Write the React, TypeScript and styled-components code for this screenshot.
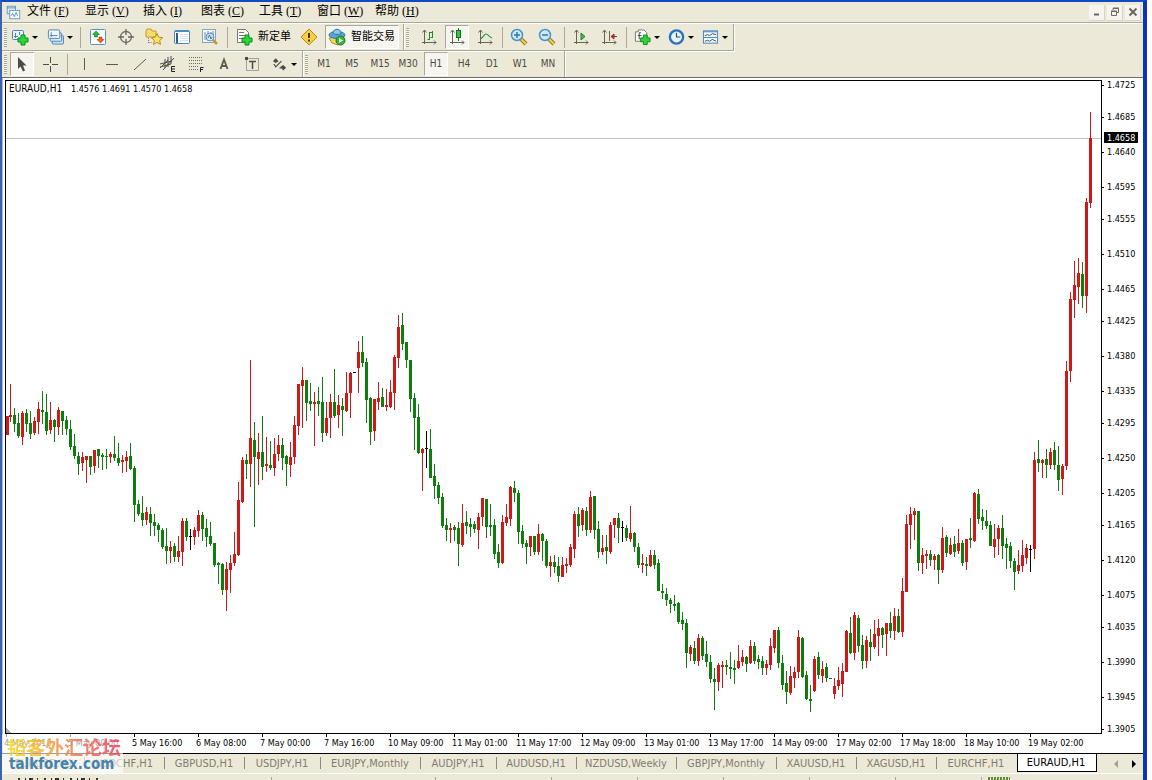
import React from "react";
import styled, { createGlobalStyle, css } from "styled-components";

const FACE = "#ece9d8";
const SHADOW = "#aca899";
const UI = `"DejaVu Sans Condensed", "DejaVu Sans", "Noto Sans CJK SC", sans-serif`;
const HAN = `"Liberation Serif", "Noto Sans CJK SC", serif`;

const Global = createGlobalStyle`
  * { box-sizing: border-box; }
  body { margin: 0; background: #fff; overflow: hidden; }
  button { font: inherit; color: inherit; background: none; border: 0; padding: 0; }
`;

/* ---------- window frame ---------- */

const Window = styled.div`
  display: flex;
  flex-direction: column;
  margin-right: 5px;
  border-top: 2px solid #0f4cc4;
  border-right: 4px solid #0c35b8;
  border-left: 2px solid #3a64ae;
  background: #fff;
  font-family: ${UI};
  font-size: 11px;
`;

const MenuBar = styled.nav`
  display: flex;
  align-items: center;
  height: 22px;
  padding-left: 4px;
  background: ${FACE};
  border-bottom: 1px solid #fff;
  box-shadow: inset 0 -1px 0 ${SHADOW};
`;

const MenuItem = styled.button`
  width: 58px;
  height: 20px;
  text-align: left;
  font: 12px/16px ${HAN};
  padding-bottom: 4px;
  color: #000;
  white-space: nowrap;
`;

const AppMark = styled.span`
  display: flex;
  width: 21px;
`;

const Caption = styled.span`
  display: flex;
  gap: 2px;
  margin-left: auto;
  padding-right: 2px;
`;

const CaptionButton = styled.button`
  display: flex;
  align-items: center;
  justify-content: center;
  width: 16px;
  height: 16px;
  background: #f5f4ee;
  border-right: 1px solid #d8d5c6;
  border-bottom: 1px solid #d8d5c6;
`;

/* ---------- toolbars ---------- */

const Toolbars = styled.header`
  display: flex;
  flex-direction: column;
  background: ${FACE};
  border-bottom: 1px solid #716f64;
`;

const ToolRow = styled.div<{ $h: number }>`
  display: flex;
  height: ${(p) => p.$h}px;
`;

const Toolbar = styled.div<{ $last?: boolean }>`
  display: flex;
  align-items: center;
  padding-right: 2px;
  border-right: 1px solid ${SHADOW};
  border-bottom: ${(p) => (p.$last ? "0" : `1px solid ${SHADOW}`)};
  box-shadow: 1px ${(p) => (p.$last ? "0" : "1px")} 0 #fff;
`;

const Grip = styled.span<{ $after: number }>`
  width: 3px;
  height: 19px;
  margin: 0 ${(p) => p.$after}px 0 2px;
  background: repeating-linear-gradient(${SHADOW} 0 1px, #f8f7f0 1px 2px);
`;

const Separator = styled.span<{ $w: number }>`
  width: 1px;
  height: 21px;
  margin: 0 ${(p) => p.$w / 2 - 1}px 0 ${(p) => p.$w / 2}px;
  background: ${SHADOW};
`;

const Tool = styled.button<{ $pressed?: boolean; $w?: number; $gap?: number }>`
  display: flex;
  align-items: center;
  justify-content: ${(p) => (p.$w ? "flex-start" : "center")};
  gap: ${(p) => p.$gap ?? 3}px;
  flex: none;
  width: ${(p) => p.$w ?? 24}px;
  height: 24px;
  margin: 0 2px;
  padding-left: ${(p) => (p.$w ? 2 : 0)}px;
  border: 1px solid transparent;
  font: 11px/14px ${UI};
  white-space: nowrap;
  color: #000;
  ${(p) =>
    p.$pressed &&
    css`
      background: #f6f5ef;
      border-color: ${SHADOW} #fff #fff ${SHADOW};
    `}
`;

const Period = styled(Tool)`
  font-size: 10px;
  color: #4c4a42;
`;

const Arrow = styled.i`
  width: 5px;
  border: 3px solid transparent;
  border-top-color: #000;
  border-bottom: 0;
`;

/* ---------- chart, tabs, status ---------- */

const Plot = styled.svg`
  display: block;
  width: 100%;
  font-family: ${UI};
  font-size: 9px;
`;

const Footer = styled.footer`
  position: relative;
  background: ${FACE};
  border-top: 1px solid #000;
`;

const Tabs = styled.div`
  display: flex;
  height: 20px;
  padding-left: 3px;
  border-bottom: 1px solid #fff;
`;

const Tab = styled.button<{ $w: number; $active?: boolean; $bar?: boolean }>`
  flex: none;
  display: flex;
  align-items: center;
  justify-content: center;
  width: ${(p) => p.$w}px;
  height: 18px;
  padding-right: 2px;
  color: ${(p) => (p.$active ? "#000" : "#7f7c6e")};
  background: ${(p) =>
    p.$active ? "#fff" : p.$bar ? "linear-gradient(#8d8a7c, #8d8a7c) right 3px / 1px 12px no-repeat" : "none"};
  ${(p) =>
    p.$active &&
    css`
      border: solid #000;
      border-width: 0 1px 1px 1px;
    `}
`;

const Scrollers = styled.span`
  display: flex;
  align-items: center;
  gap: 14px;
  margin-left: auto;
  padding-right: 7px;
`;

const Scroll = styled.button<{ $next?: boolean }>`
  width: 4px;
  height: 8px;
  border: solid transparent;
  border-width: ${(p) => (p.$next ? "4px 0 4px 4px" : "4px 4px 4px 0")};
  border-left-color: ${(p) => (p.$next ? "#000" : "transparent")};
  border-right-color: ${(p) => (p.$next ? "transparent" : "#a5a294")};
`;

const StatusBar = styled.div`
  display: flex;
  height: 6px;
  padding: 3px 0 0 2px;
  overflow: hidden;
`;

const StatusCell = styled.span<{ $w: number }>`
  flex: none;
  width: ${(p) => p.$w}px;
  height: 3px;
  border-right: 1px solid ${SHADOW};
`;

const StatusMarks = styled.svg`
  display: block;
  margin-left: 14px;
`;

const Watermark = styled.div`
  position: absolute;
  left: 0;
  bottom: 6px;
  width: 121px;
  height: 40px;
  background: rgba(255, 255, 255, 0.62);
  white-space: nowrap;
`;

const WatermarkName = styled.div`
  margin: 3px 0 0 5px;
  font: bold 19px/19px "Noto Sans CJK SC", sans-serif;
  color: transparent;
  background: linear-gradient(90deg, #f5dc1e, #f8b030 30%, #f08a50 50%, #f0605a 75%, #ee3f5c);
  background-clip: text;
  -webkit-background-clip: text;
  opacity: 0.85;
`;

const WatermarkSite = styled.div`
  padding-left: 7px;
  font: bold 15px/16px "DejaVu Sans Condensed", "DejaVu Sans", sans-serif;
  color: #4683ac;
`;

/* ---------- icons ---------- */

const axes = (
  <path d="M4.5 2v14M2 14.5h14M2.5 4.5l2-2.5 2 2.5M14 12.5l2 2-2 2" stroke="#666459" fill="none" />
);
const sheet = (x: number, y: number) => (
  <rect x={x} y={y} width="11" height="9" rx="1" fill="#e6f1fa" stroke="#4d84b4" />
);
const plus = (x: number, y: number) => (
  <path
    d={`M${x + 3} ${y}h4v3h3v4h-3v3h-4v-3h-3v-4h3z`}
    fill="#2fd43a"
    stroke="#0b8a1a"
  />
);
const lens = (
  <>
    <path d="M11 11l5 5" stroke="#9a7a1c" strokeWidth="4" />
    <path d="M11 11l5 5" stroke="#f4d04c" strokeWidth="2" />
    <circle cx="7" cy="7" r="5.5" fill="#cfe9fb" stroke="#4a92c8" strokeWidth="1.5" />
  </>
);

const icons: Record<string, React.ReactNode> = {
  app: (
    <>
      <rect x="1.500" y="1.500" width="10" height="9" fill="#dcecf8" stroke="#5c93bf" />
      <rect x="4.500" y="6.500" width="12" height="10" fill="#f4f9fd" stroke="#5c93bf" />
      <path d="M1 3.500h11M6 13l2-3 2 4 2-5 2 4" fill="none" stroke="#4a86b8" />
    </>
  ),
  newChart: (
    <>
      {sheet(1.5, 2.5)}
      <path d="M4.500 5v5M3 8.500h4M8.500 4v3" stroke="#4d84b4" fill="none" />
      {plus(7, 7)}
    </>
  ),
  profiles: (
    <>
      <rect x="5.500" y="7.500" width="12" height="9" rx="1" fill="#c9dff0" stroke="#4d84b4" />
      <rect x="3.500" y="4.500" width="12" height="9" rx="1" fill="#d8e8f5" stroke="#4d84b4" />
      <rect x="1.500" y="1.500" width="12" height="9" rx="1" fill="#eef6fc" stroke="#4d84b4" />
      <path d="M4.500 4v5M3 7.500h8" stroke="#4d84b4" fill="none" />
    </>
  ),
  market: (
    <>
      <rect x="1.500" y="1.500" width="15" height="15" rx="1" fill="#fff" stroke="#4f94c6" />
      <path d="M7 3l3.500 3.500-2 0v2.500h-3v-2.500h-2z" fill="#2fb53a" stroke="#167a22" strokeWidth=".6" />
      <path d="M11.500 15l3.500-3.500h-2v-2.500h-3v2.500h-2z" fill="#f0622e" stroke="#a83a12" strokeWidth=".6" />
    </>
  ),
  target: (
    <g fill="none" stroke="#6a6860" strokeWidth="1.300">
      <circle cx="9" cy="9" r="5.500" />
      <path d="M9 1v6M9 11v6M1 9h6M11 9h6" />
    </g>
  ),
  favorites: (
    <>
      <path d="M1 3l1-2h4l1 2h4v6H1z" fill="#f7dd6a" stroke="#c39a26" />
      <path d="M3.500 10v5M3.500 14.500h4" stroke="#777" strokeDasharray="1 1" />
      <path d="M12 5.500l1.700 3.700 4 .5-3 2.700.8 4-3.500-2-3.500 2 .8-4-3-2.700 4-.5z" fill="#fbe26a" stroke="#b98c1c" />
    </>
  ),
  navigator: (
    <>
      <rect x="1.500" y="2.500" width="15" height="13" rx="1" fill="#fff" stroke="#4a8cc2" />
      <path d="M2 3.500h14" stroke="#4a8cc2" />
      <path d="M4 5v10" stroke="#2b5f93" strokeWidth="2" />
      <path d="M7 6.500h8M7 8.500h8M7 10.500h8M7 12.500h8" stroke="#c3d9ea" strokeWidth=".8" />
    </>
  ),
  tester: (
    <>
      <rect x="1.500" y="1.500" width="13" height="13" fill="#f6fafc" stroke="#86a4bb" />
      <path d="M4 4v8M7 3v6M10 4v4M12 3v7" stroke="#6a8fb0" />
      <path d="M12 12l4 4" stroke="#c99a2c" strokeWidth="2.500" />
      <circle cx="9" cy="9" r="4" fill="#cbe4f6" fillOpacity=".8" stroke="#5f91b8" />
      <path d="M7 10l1.500-3 1.500 4 1-2" fill="none" stroke="#52759a" />
    </>
  ),
  order: (
    <>
      <path d="M2.500 1.500h8l3 3v10h-11z" fill="#fff" stroke="#77756c" />
      <path d="M4 4.500h5M4 7.500h7M4 10.500h5" stroke="#77756c" />
      {plus(7, 7)}
    </>
  ),
  warning: (
    <>
      <path d="M9 1l8 8-8 8-8-8z" fill="#f8cf3e" stroke="#b88716" strokeLinejoin="round" />
      <path d="M9 5v5M9 11.500v2" stroke="#4b3a08" strokeWidth="2" />
    </>
  ),
  advisor: (
    <>
      <path d="M1 10l3 5 6 2 5-5 1-4z" fill="#f5d65a" stroke="#b4922a" />
      <ellipse cx="9" cy="7" rx="8" ry="3.500" fill="#5ba4d6" stroke="#2c73a8" />
      <path d="M5 5c0-5 8-5 8 0 0 2-8 2-8 0z" fill="#8cc5e8" stroke="#2c73a8" />
      <circle cx="12.500" cy="12.500" r="4.500" fill="#37b53f" stroke="#167a22" />
      <path d="M11 10l4 2.500-4 2.500z" fill="#fff" />
    </>
  ),
  bars: (
    <>
      {axes}
      <path d="M9.500 4v8M9.500 11.500h-2M9.500 4.500h3M12.500 3v7M12.500 9.500h-2" stroke="#1e8a2a" />
    </>
  ),
  candles: (
    <>
      {axes}
      <path d="M10.500 0v13" stroke="#14701f" />
      <rect x="8.500" y="2.500" width="4" height="7" fill="#2fc53c" stroke="#14701f" />
    </>
  ),
  line: (
    <>
      {axes}
      <path d="M4 11c3-1 4-5 6-5s3 3 6 4" fill="none" stroke="#2a9a36" strokeWidth="1.200" />
    </>
  ),
  zoomIn: (
    <>
      {lens}
      <path d="M4 7h6M7 4v6" stroke="#2d78b0" strokeWidth="1.500" />
    </>
  ),
  zoomOut: (
    <>
      {lens}
      <path d="M4 7h6" stroke="#2d78b0" strokeWidth="1.500" />
    </>
  ),
  scroll: (
    <>
      {axes}
      <path d="M9 5l4 3.500-4 3.500z" fill="#3fc24a" stroke="#14802a" />
    </>
  ),
  shift: (
    <>
      {axes}
      <path d="M9.500 3v10" stroke="#666459" />
      <path d="M17 8.500h-5M14 6l-3 2.500 3 2.500z" fill="#b8342a" stroke="#a02c22" />
    </>
  ),
  indicators: (
    <>
      <path d="M1.500 3.500h3v-2h6l3 3v9h-12z" fill="#fff" stroke="#77756c" />
      <path d="M7.500 4.500h-2v7M4 7.500h4" stroke="#3b3a34" fill="none" />
      {plus(7, 7)}
    </>
  ),
  clock: (
    <>
      <circle cx="9" cy="9" r="7" fill="#e8f4fd" stroke="#2a72bd" strokeWidth="2.500" />
      <path d="M9 4.500V9h4" fill="none" stroke="#274f77" strokeWidth="1.200" />
    </>
  ),
  template: (
    <>
      <rect x="1.500" y="2.500" width="15" height="13" fill="#f4fafd" stroke="#3f83b8" />
      <path d="M2 3.500h14M2 9.500h14" stroke="#3f83b8" />
      <path d="M3 7.500l3-1 2 1 3-2 4 1M3 13.500l3-1 2 1 3-2 4 2" fill="none" stroke="#2e4e5f" />
    </>
  ),
  pointer: <path d="M5 2l8.500 8.500H10l2 5-2 1-2.500-5-2.500 2.500z" fill="#4c4b46" />,
  cross: <path d="M9.500 2v6M9.500 11v6M2 9.500h6M11 9.500h6" stroke="#4c4b46" />,
  vline: <path d="M9.500 3v12" stroke="#5b5a54" />,
  hline: <path d="M3 9.500h12" stroke="#5b5a54" />,
  trend: <path d="M3 15L15 4" stroke="#5b5a54" />,
  channel: (
    <>
      <path d="M1 13l8-8M4 15L15 3M1 9l12-3M1 12l11-3M6 4v9M9 2v10M12 1v8" stroke="#4c4b46" fill="none" />
      <path d="M16 11.500h-3.500v5H16M13 14h3" stroke="#222" fill="none" />
    </>
  ),
  fibo: (
    <>
      <path d="M2 2.500h14M2 5.500h14M2 8.500h14M2 11.500h9M2 14.500h9" stroke="#6b6a62" strokeDasharray="1 1" />
      <path d="M16.500 12.500h-3V17M13 14.500h3" stroke="#222" fill="none" />
    </>
  ),
  text: <path d="M5.500 14L9 4.500l3.500 9.500M6.500 11h5" stroke="#5b5a54" strokeWidth="1.800" fill="none" />,
  label: (
    <>
      <rect x="3.500" y="3.500" width="12" height="12" fill="none" stroke="#5b5a54" strokeDasharray="1 1" />
      <path d="M6 6.500h7M9.500 6v8" stroke="#4c4b46" strokeWidth="1.500" />
      <path d="M2 2h3v3H2z" fill="#4c4b46" />
    </>
  ),
  shapes: (
    <>
      <path d="M2 6l3-3 3 3-3 2zM10 12l3-2 3 3-3 3z" fill="#4c4b46" />
      <path d="M3 9l2 3 6-6M9 13h3" fill="none" stroke="#4c4b46" strokeWidth="1.300" />
    </>
  ),
};

const Icon = ({ name, size = 18 }: { name: string; size?: number }) => (
  <svg width={size} height={size} viewBox="0 0 18 18" aria-hidden="true">
    {icons[name]}
  </svg>
);

/* ---------- data ---------- */

/* One entry per hourly bar: direction, high, body top, body bottom, low (chart y units). */
const series = `
R416,416,435,435 R384,415,417,422 G408,415,424,432 G413,423,436,438 R411,413,437,445 G409,413,424,432 G411,423,434,439 R417,421,433,435
R402,409,422,434 G391,410,412,424 G394,412,431,435 R402,420,430,434 G419,420,427,442 R407,410,427,435 G411,411,421,435 G416,420,429,435
G420,429,447,450 G434,446,456,459 G452,456,464,475 R452,457,463,471 R456,456,460,483 G456,456,467,475 R450,450,466,473 G449,449,456,468
G453,455,457,470 G449,456,457,469 R452,454,457,463 G436,454,458,461 G443,458,463,466 R455,460,462,473 R451,457,461,472 G443,456,469,470
G466,468,505,522 G500,504,514,516 G496,513,520,526 R507,512,520,525 G507,514,523,536 G514,522,526,536 G523,525,530,542 G528,530,547,549
G528,546,551,564 R541,547,551,563 G543,546,557,562 R536,551,557,562 R518,521,552,566 G518,521,537,541 K529,536,537,550 R527,530,537,545
R510,515,531,537 G512,515,529,541 G519,528,537,547 G522,536,544,546 G543,543,565,567 G562,563,565,584 G563,564,590,595 R562,569,590,611
R555,563,570,593 R532,554,563,566 R482,500,555,556 R457,460,502,503 G454,460,464,479 R360,438,464,487 G422,440,457,527 R433,452,459,485
G416,452,467,480 R437,464,466,472 G441,465,468,470 R438,454,468,476 R435,445,454,461 G438,445,458,470 G455,456,464,486 R442,457,465,477
R416,425,457,464 R384,384,426,435 R367,380,386,428 G380,380,403,421 G383,401,404,411 R392,402,404,446 G387,401,404,416 G377,402,433,442
R402,418,433,436 R394,402,418,438 G369,402,416,418 R395,405,415,428 G398,406,410,436 R372,393,411,412 R372,373,393,418 K372,372,373,373
R341,352,368,393 G336,352,363,367 G358,362,400,423 G397,398,432,445 R399,399,431,441 R382,398,402,410 G388,397,407,407 R389,405,407,411
R380,392,407,408 R355,357,393,410 R315,327,358,368 G313,325,344,350 G342,342,360,368 G360,360,399,412 G393,398,418,450 G404,417,453,454
R448,449,453,491 K431,448,449,468 G429,449,478,478 G464,476,486,499 G482,485,498,504 G493,497,526,528 G518,525,530,541 R523,528,530,543
G525,527,530,541 G522,528,544,566 R504,523,545,547 G511,522,526,534 G518,524,527,537 G521,524,529,533 R513,517,530,549 R498,498,517,526
G499,499,527,538 G504,525,527,536 G519,525,554,559 G544,552,563,568 R515,522,563,564 R504,517,523,526 R486,487,519,526 G481,488,493,502
G490,493,532,544 G525,531,544,548 G540,543,547,564 R536,536,547,556 G536,536,552,555 R524,534,552,555 G533,534,541,561 G539,541,566,568
R556,562,566,577 G555,562,567,573 G557,566,576,582 R557,565,577,577 R558,564,566,573 R544,547,565,567 R511,514,549,558 G507,514,526,537
R508,510,525,531 G507,511,530,536 R491,497,530,533 G496,496,530,539 G521,529,552,558 R535,548,552,555 G535,547,551,564 R522,525,552,554
R518,518,525,538 G513,518,528,543 K521,527,528,542 G525,528,538,541 R506,533,539,542 G532,533,547,552 G543,547,565,568 R554,563,565,573
G557,564,566,576 R550,555,566,567 G550,555,565,569 G559,563,591,591 G584,591,593,599 G588,594,600,606 G598,600,604,613 G595,604,606,611
G602,603,622,624 G612,620,624,630 G619,623,653,668 R645,647,654,661 G641,648,661,664 R634,638,661,666 G636,638,656,660 G641,654,662,667
G655,662,679,683 G668,679,682,710 R663,665,682,691 R661,665,667,688 G660,665,667,675 G652,667,669,679 G660,668,670,684 R645,661,668,669
R650,657,662,666 G656,657,664,672 R640,646,663,664 G642,646,661,664 G655,659,662,669 G656,661,668,675 R660,664,668,675 R638,646,665,670
R630,630,648,653 G627,630,663,668 G655,663,685,690 G671,683,692,704 R666,676,693,695 R667,672,678,688 R630,637,672,678 G637,638,677,678
G671,675,699,700 G685,699,701,712 R656,659,691,692 G652,657,675,679 R661,669,676,683 G663,667,678,682 G678,678,679,679 R678,686,694,699
R667,680,686,690 R663,671,684,697 R630,631,672,672 G617,633,653,654 R612,615,653,660 G615,618,646,652 G635,645,661,669 R636,640,661,668
G629,642,647,661 R620,634,647,649 R619,628,636,656 G627,628,635,648 R623,623,634,656 G612,623,631,638 R608,616,631,640 G609,616,632,633
R578,591,632,637 R515,524,592,592 R507,514,525,549 R508,511,515,540 G511,511,563,571 R548,555,563,574 R550,554,556,569 G550,554,560,566
R554,556,560,570 G554,555,570,584 R527,538,570,573 G535,537,553,557 R538,545,554,555 G536,544,552,557 R529,543,551,554 G540,543,563,566
R539,539,562,570 G518,538,540,548 R492,493,541,542 G489,494,519,524 G509,517,521,530 G510,521,526,529 G521,525,546,546 R524,539,547,558
R525,528,539,555 G515,528,546,559 G538,544,548,569 G542,546,561,568 G558,561,572,590 R550,565,571,574 R540,555,566,572 R544,548,558,564
K545,549,550,572 R452,460,549,559 G440,459,463,472 R459,460,463,478 G449,459,465,478 R448,452,465,469 G442,450,465,470 G446,465,480,491
R464,466,479,495 R361,371,466,470 R292,299,371,382 R261,285,300,318 R258,273,287,304 G262,274,296,308 R198,202,296,313 R112,138,203,208
`;

const candles = series
  .trim()
  .split(/\s+/)
  .map((entry, i) => ({
    x: 6 + i * 4,
    tone: entry[0],
    v: entry.slice(1).split(",").map(Number),
  }));

const tones: Record<string, string> = { R: "#d01818", G: "#0f7d0f", K: "#000" };

const prices: [string, number][] = [
  ["1.4725", 85], ["1.4685", 117], ["1.4640", 152], ["1.4595", 187], ["1.4555", 219],
  ["1.4510", 254], ["1.4465", 289], ["1.4425", 321], ["1.4380", 356], ["1.4335", 391],
  ["1.4295", 423], ["1.4250", 458], ["1.4205", 493], ["1.4165", 525], ["1.4120", 560],
  ["1.4075", 595], ["1.4035", 627], ["1.3990", 662], ["1.3945", 697], ["1.3905", 729],
];

const times = [
  "4 May 2010", "5 May 00:00", "5 May 16:00", "6 May 08:00", "7 May 00:00", "7 May 16:00",
  "10 May 09:00", "11 May 01:00", "11 May 17:00", "12 May 09:00", "13 May 01:00", "13 May 17:00",
  "14 May 09:00", "17 May 02:00", "17 May 18:00", "18 May 10:00", "19 May 02:00",
];

const menus = [
  ["文件", "F"], ["显示", "V"], ["插入", "I"], ["图表", "C"], ["工具", "T"], ["窗口", "W"], ["帮助", "H"],
];

const tabs: [string, number][] = [
  ["EURUSD,H1", 80], ["USDCHF,H1", 80], ["GBPUSD,H1", 80], ["USDJPY,H1", 76], ["EURJPY,Monthly", 100],
  ["AUDJPY,H1", 76], ["AUDUSD,H1", 80], ["NZDUSD,Weekly", 100], ["GBPJPY,Monthly", 100],
  ["XAUUSD,H1", 80], ["XAGUSD,H1", 80], ["EURCHF,H1", 80], ["EURAUD,H1", 80],
];

const periods = ["M1", "M5", "M15", "M30", "H1", "H4", "D1", "W1", "MN"];
const statusCells = [268, 164, 116, 86, 86, 86, 86, 86];

/* ---------- parts ---------- */

const IconTool = ({ name, title, pressed, menu, wide }: {
  name: string; title: string; pressed?: boolean; menu?: boolean; wide?: boolean;
}) => (
  <Tool aria-label={title} aria-pressed={pressed} $pressed={pressed} $w={menu ? (wide ? 32 : 30) : undefined}>
    <Icon name={name} />
    {menu && <Arrow />}
  </Tool>
);

const Chart = () => (
  <Plot viewBox="2 78 1141 675" role="img" aria-label="EURAUD, H1 candlestick chart">
    <g shapeRendering="crispEdges">
      <rect x="2" y="78" width="1" height="675" fill="#a9b7cf" />
      <path d="M6 138.500H1101" stroke="#c0c0c0" />
      {candles.map(({ x, tone, v }) => (
        <g key={x} fill={tones[tone]}>
          <rect x={x} y={v[0]} width="1" height={v[3] - v[0]} />
          <rect x={Math.max(x - 1, 6)} y={v[1]} width="3" height={v[2] - v[1]} />
        </g>
      ))}
      <path d="M5.500 80.500H1101.500V733.500H5.500Z" fill="none" stroke="#000" />
      <path d="M6 728v5h5z" fill="#a8a8a8" />
      {prices.map(([label, y]) => (
        <rect key={label} x="1102" y={y} width="2" height="1" />
      ))}
      {times.map((label, i) => (
        <rect key={label} x={6 + i * 64} y="734" width="1" height="3" />
      ))}
      <rect x="1104" y="132" width="34" height="11" />
    </g>
    <text x="9" y="92" fontSize="10">EURAUD,H1</text>
    {["1.4576", "1.4691", "1.4570", "1.4658"].map((value, i) => (
      <text key={value} x={71 + i * 31} y="92">{value}</text>
    ))}
    {prices.map(([label, y]) => (
      <text key={label} x="1107" y={y + 3}>{label}</text>
    ))}
    <text x="1107" y="141" fill="#fff">1.4658</text>
    {times.map((label, i) => (
      <text key={label} x={4 + i * 64} y="746">{label}</text>
    ))}
  </Plot>
);

export default function App() {
  return (
    <Window>
      <Global />
      <MenuBar>
        <AppMark><Icon name="app" size={15} /></AppMark>
        {menus.map(([name, key]) => (
          <MenuItem key={key}>{name} (<u>{key}</u>)</MenuItem>
        ))}
        <Caption>
          <CaptionButton aria-label="Minimize">
            <svg width="10" height="10"><path d="M2 7.500h5" stroke="#6b695f" strokeWidth="2" /></svg>
          </CaptionButton>
          <CaptionButton aria-label="Restore">
            <svg width="10" height="10">
              <path d="M3 3V1.500h5.500v4H7M1.500 4.500h5v4h-5z" fill="none" stroke="#6b695f" />
              <path d="M3 1h6M1 4h6" stroke="#6b695f" />
            </svg>
          </CaptionButton>
          <CaptionButton aria-label="Close">
            <svg width="10" height="10"><path d="M1.500 1.500l7 7M8.500 1.500l-7 7" stroke="#6b695f" strokeWidth="2" /></svg>
          </CaptionButton>
        </Caption>
      </MenuBar>

      <Toolbars>
        <ToolRow $h={27}>
          <Toolbar>
            <Grip $after={-1} />
            <IconTool name="newChart" title="New chart" menu wide />
            <IconTool name="profiles" title="Profiles" menu />
            <Separator $w={8} />
            <IconTool name="market" title="Market watch" />
            <IconTool name="target" title="Data window" />
            <IconTool name="favorites" title="Navigator" />
            <IconTool name="navigator" title="Terminal" />
            <IconTool name="tester" title="Strategy tester" />
            <Separator $w={6} />
            <Tool $w={61} $gap={5}><Icon name="order" />新定单</Tool>
            <IconTool name="warning" title="MetaEditor" />
            <Tool $w={74} $gap={5} $pressed aria-pressed><Icon name="advisor" />智能交易</Tool>
          </Toolbar>
          <Toolbar>
            <Grip $after={6} />
            <IconTool name="bars" title="Bar chart" />
            <IconTool name="candles" title="Candlesticks" pressed />
            <IconTool name="line" title="Line chart" />
            <Separator $w={6} />
            <IconTool name="zoomIn" title="Zoom in" />
            <IconTool name="zoomOut" title="Zoom out" />
            <Separator $w={6} />
            <IconTool name="scroll" title="Auto scroll" />
            <IconTool name="shift" title="Chart shift" />
            <Separator $w={6} />
            <IconTool name="indicators" title="Indicators" menu />
            <IconTool name="clock" title="Periods" menu />
            <IconTool name="template" title="Templates" menu />
          </Toolbar>
        </ToolRow>
        <ToolRow $h={26}>
          <Toolbar $last>
            <Grip $after={1} />
            <IconTool name="pointer" title="Cursor" pressed />
            <IconTool name="cross" title="Crosshair" />
            <Separator $w={6} />
            <IconTool name="vline" title="Vertical line" />
            <IconTool name="hline" title="Horizontal line" />
            <IconTool name="trend" title="Trendline" />
            <IconTool name="channel" title="Equidistant channel" />
            <IconTool name="fibo" title="Fibonacci retracement" />
            <IconTool name="text" title="Text" />
            <IconTool name="label" title="Text label" />
            <IconTool name="shapes" title="Arrows" menu />
          </Toolbar>
          <Toolbar $last>
            <Grip $after={2} />
            {periods.map((p) => (
              <Period key={p} $pressed={p === "H1"} aria-pressed={p === "H1"}>{p}</Period>
            ))}
          </Toolbar>
        </ToolRow>
      </Toolbars>

      <Chart />

      <Footer>
        <Tabs>
          {tabs.map(([name, w], i) => (
            <Tab key={name} $w={w} $active={i === tabs.length - 1} $bar={i < tabs.length - 2}>{name}</Tab>
          ))}
          <Scrollers>
            <Scroll aria-label="Previous charts" />
            <Scroll $next aria-label="More charts" />
          </Scrollers>
        </Tabs>
        <StatusBar>
          {statusCells.map((w, i) => (
            <StatusCell key={i} $w={w}>
              {i === 0 && (
                <StatusMarks width="80" height="3" aria-hidden="true">
                  <path d="M0 2h80" stroke="#333" strokeWidth="2" strokeDasharray="2 5 1 3 4 4 1 6" />
                </StatusMarks>
              )}
            </StatusCell>
          ))}
          <svg width="30" height="3" aria-hidden="true">
            <path d="M6 1.500h22" stroke="#5f8f2a" strokeWidth="3" strokeDasharray="2 1" />
          </svg>
        </StatusBar>
        <Watermark>
          <WatermarkName>韬客外汇论坛</WatermarkName>
          <WatermarkSite>talkforex.com</WatermarkSite>
        </Watermark>
      </Footer>
    </Window>
  );
}
